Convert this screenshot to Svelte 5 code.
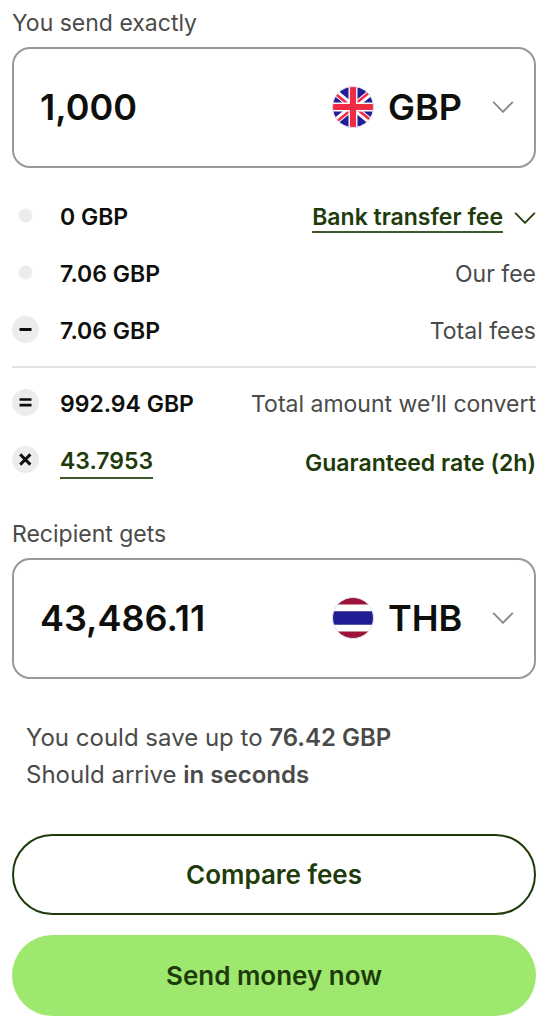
<script>
  let sendAmount = $state('1,000');
  let recipientAmount = $state('43,486.11');

  const fees = [
    { icon: 'dot', value: '0 GBP', label: 'Bank transfer fee', options: true },
    { icon: 'dot', value: '7.06 GBP', label: 'Our fee' },
    { icon: 'minus', value: '7.06 GBP', label: 'Total fees' }
  ];
</script>

{#snippet chevron()}
  <svg class="chevron" viewBox="0 0 22 12" aria-hidden="true">
    <path d="M1.2 .8 11 10.8 20.8 .8" fill="none" stroke="currentColor" stroke-width="1.8" />
  </svg>
{/snippet}

{#snippet sign(kind)}
  <svg class="sign" viewBox="0 0 27 27" aria-hidden="true">
    <circle cx="13.5" cy="13.5" r={kind === 'dot' ? 7 : 13.5} fill="#ececeb" />
    {#if kind === 'minus'}
      <path d="M7.5 13.5h12" stroke="#0e0f0c" stroke-width="3" />
    {:else if kind === 'equals'}
      <path d="M7.5 10.5h12M7.5 16.2h12" stroke="#0e0f0c" stroke-width="2.7" />
    {:else if kind === 'times'}
      <path d="m8.2 8.4 10.2 10.2M18.4 8.4 8.2 18.6" stroke="#0e0f0c" stroke-width="2.9" />
    {/if}
  </svg>
{/snippet}

<main>
  <label class="caption" for="send">You send exactly</label>
  <div class="field">
    <input id="send" inputmode="decimal" bind:value={sendAmount} />
    <svg class="flag" viewBox="0 0 42 42" aria-hidden="true">
      <clipPath id="round-gb"><circle cx="21" cy="21" r="20.5" /></clipPath>
      <g clip-path="url(#round-gb)">
        <path fill="#211d94" d="M0 0h42v42H0z" />
        <path stroke="#fff" stroke-width="6.4" d="M-1 3 43 39M43 3-1 39" />
        <path stroke="#f02c44" stroke-width="2.6" d="M-1 4.2 21 22.2M43 1.8 21 19.8M-1 40.2 21 22.2M43 37.8 21 19.8" />
        <path stroke="#fff" stroke-width="9" d="M21 0v42M0 21h42" />
        <path stroke="#f02c44" stroke-width="6.2" d="M21 0v42M0 21h42" />
      </g>
      <circle cx="21" cy="21" r="20.5" fill="none" stroke="#e3e1f0" />
    </svg>
    <div class="picker">
      <select aria-label="Currency you send">
        <option>GBP</option>
      </select>
      {@render chevron()}
    </div>
  </div>

  <ul class="rows fees">
    {#each fees as fee}
      <li>
        {@render sign(fee.icon)}
        <strong>{fee.value}</strong>
        {#if fee.options}
          <div class="method">
            <select aria-label="Payment method">
              <option>{fee.label}</option>
            </select>
            {@render chevron()}
          </div>
        {:else}
          <span class="note">{fee.label}</span>
        {/if}
      </li>
    {/each}
  </ul>

  <ul class="rows rate">
    <li>
      {@render sign('equals')}
      <strong>992.94 GBP</strong>
      <span class="note">Total amount we’ll convert</span>
    </li>
    <li>
      {@render sign('times')}
      <a href="#rate">43.7953</a>
      <strong class="note guaranteed">Guaranteed rate (2h)</strong>
    </li>
  </ul>

  <label class="caption" for="receive">Recipient gets</label>
  <div class="field">
    <input id="receive" inputmode="decimal" bind:value={recipientAmount} />
    <svg class="flag" viewBox="0 0 42 42" aria-hidden="true">
      <clipPath id="round-th"><circle cx="21" cy="21" r="20.5" /></clipPath>
      <g clip-path="url(#round-th)">
        <path fill="#fff" d="M0 0h42v42H0z" />
        <path fill="#9c1239" d="M0 0h42v7.5H0zM0 34.5h42V42H0z" />
        <path fill="#211d94" d="M0 14.2h42v13.6H0z" />
      </g>
      <circle cx="21" cy="21" r="20.5" fill="none" stroke="#e3e1f0" />
    </svg>
    <div class="picker">
      <select aria-label="Currency recipient gets">
        <option>THB</option>
      </select>
      {@render chevron()}
    </div>
  </div>

  <p class="summary">
    You could save up to <strong>76.42 GBP</strong><br />
    Should arrive <strong>in seconds</strong>
  </p>

  <div class="actions">
    <button type="button" class="outline">Compare fees</button>
    <button type="button" class="solid">Send money now</button>
  </div>
</main>

<style>
  :global(body) {
    background: #fff;
  }

  main {
    padding: 8px 14px 8px 12px;
    font-family: Inter, 'Liberation Sans', sans-serif;
    font-size: 23px;
    line-height: 31px;
    color: #4a4b49;
  }

  strong {
    font-weight: 600;
  }

  input,
  select,
  button {
    margin: 0;
    padding: 0;
    border: 0;
    background: none;
    font: inherit;
    color: inherit;
  }

  select {
    appearance: none;
    field-sizing: content;
    cursor: pointer;
  }

  .caption {
    display: block;
  }

  .field {
    display: flex;
    align-items: center;
    box-sizing: border-box;
    height: 121px;
    margin-top: 8px;
    padding: 0 20px 2px 26px;
    border: 2px solid #999998;
    border-radius: 18px;
    font-size: 36px;
    font-weight: 600;
    line-height: 48px;
    color: #0e0f0c;
  }

  .field input {
    flex: 1;
    min-width: 0;
  }

  .flag {
    flex: none;
    width: 42px;
    height: 42px;
    margin-right: 14px;
  }

  .picker {
    display: flex;
    align-items: center;
    justify-content: space-between;
    width: 126px;
  }

  .chevron {
    flex: none;
    width: 22px;
    height: 12px;
    pointer-events: none;
  }

  .picker .chevron {
    color: #868685;
  }

  .rows {
    display: grid;
    gap: 26px;
    margin: 0;
    padding: 0;
    list-style: none;
  }

  .fees {
    margin-top: 34px;
    padding-bottom: 19px;
    border-bottom: 2px solid #e4e5e3;
  }

  .rate {
    padding: 21px 0 42px;
  }

  li {
    display: flex;
    align-items: flex-start;
    height: 31px;
    color: #0e0f0c;
  }

  .sign {
    flex: none;
    width: 27px;
    height: 27px;
    margin-right: 21px;
  }

  .note {
    margin-left: auto;
    color: #4a4b49;
  }

  a {
    border-bottom: 2px solid #3d5a2b;
    font-weight: 600;
    text-decoration: none;
    color: #203b0a;
  }

  .guaranteed {
    line-height: 35px;
    color: #203b0a;
  }

  .method {
    display: flex;
    align-items: center;
    gap: 11px;
    margin-left: auto;
    color: #203b0a;
  }

  .method select {
    box-sizing: border-box;
    height: 31px;
    border-bottom: 2px solid #3d5a2b;
    border-radius: 0;
    font-weight: 600;
  }

  .summary {
    margin: 40px 14px 41px;
    font-size: 24px;
    line-height: 37px;
  }

  .actions {
    display: grid;
    gap: 20px;
  }

  button {
    height: 81px;
    border-radius: 41px;
    font-size: 26px;
    font-weight: 600;
    color: #203b0a;
    cursor: pointer;
  }

  .outline {
    border: 2px solid #203b0a;
  }

  .solid {
    background: #9fe870;
  }
</style>
